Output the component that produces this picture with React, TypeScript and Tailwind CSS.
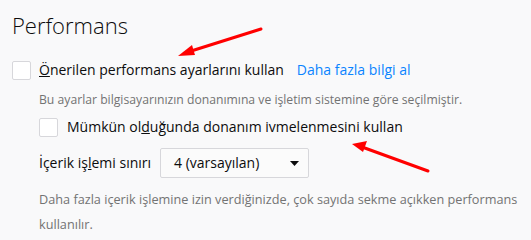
import React from "react";

function Checkbox() {
  return <span className="w-[19px] h-[19px] shrink-0 rounded-[2px] border border-[#d7d7db] bg-white" />;
}

export default function App() {
  return (
    <div
      className="relative w-[531px] h-[240px] overflow-hidden bg-[#f9f9fa] text-[#0c0c0d]"
      style={{ fontFamily: '"Open Sans", "Noto Sans", sans-serif' }}
    >
      {/* Heading */}
      <h1 className="pl-[12px] pt-[10px] text-[22px] font-light leading-[30px] text-[#0c0c0d]">Performans</h1>

      {/* Recommended settings */}
      <div className="mt-[20px] flex items-center pl-[12px] h-[20px]">
        <Checkbox />
        <span className="ml-[8px] text-[14px] leading-[20px]">
          <u>Ö</u>nerilen performans ayarlarını kullan
        </span>
        <a className="ml-[13px] text-[14px] leading-[20px] text-[#0a84ff]">Daha fazla bilgi al</a>
      </div>
      <p className="mt-[11px] pl-[39px] text-[12.2px] leading-[18px] text-[#737373]">
        Bu ayarlar bilgisayarınızın donanımına ve işletim sistemine göre seçilmiştir.
      </p>

      {/* Hardware acceleration */}
      <div className="mt-[8px] flex items-center pl-[39px] h-[20px]">
        <Checkbox />
        <span className="ml-[9px] text-[14px] leading-[20px]">
          Mümkün ol<u>d</u>uğunda donanım ivmelenmesini kullan
        </span>
      </div>

      {/* Content process limit */}
      <div className="mt-[11px] flex items-center pl-[39px] h-[30px]">
        <span className="text-[14px] leading-[20px]">
          İçerik iş<u>l</u>emi sınırı
        </span>
        <div className="ml-auto mr-[222px] flex h-[30px] w-[149px] items-center justify-between rounded-[2px] border border-[#d7d7db] bg-[#fbfbfb] pl-[13px] pr-[9px]">
          <span className="text-[14px] leading-[20px]">4 (varsayılan)</span>
          <svg width="9" height="5" viewBox="0 0 9 5">
            <path d="M0 0H9L4.5 5Z" fill="#0c0c0d" />
          </svg>
        </div>
      </div>
      <p className="mt-[9px] pl-[39px] pr-[2px] text-[12.7px] leading-[25px] text-[#737373]">
        Daha fazla içerik işlemine izin verdiğinizde, çok sayıda sekme açıkken performans kullanılır.
      </p>

      {/* Annotation arrows */}
      <svg className="pointer-events-none absolute left-0 top-0" width="531" height="240">
        <g stroke="#ff0000" strokeWidth="3" strokeLinecap="round" fill="#ff0000">
          <line x1="261" y1="29" x2="188" y2="52" />
          <line x1="428" y1="171" x2="362" y2="147" />
        </g>
        <polygon points="178,56 192,45 195,55" fill="#ff0000" />
        <polygon points="352,144 367,141 363,152" fill="#ff0000" />
      </svg>
    </div>
  );
}
